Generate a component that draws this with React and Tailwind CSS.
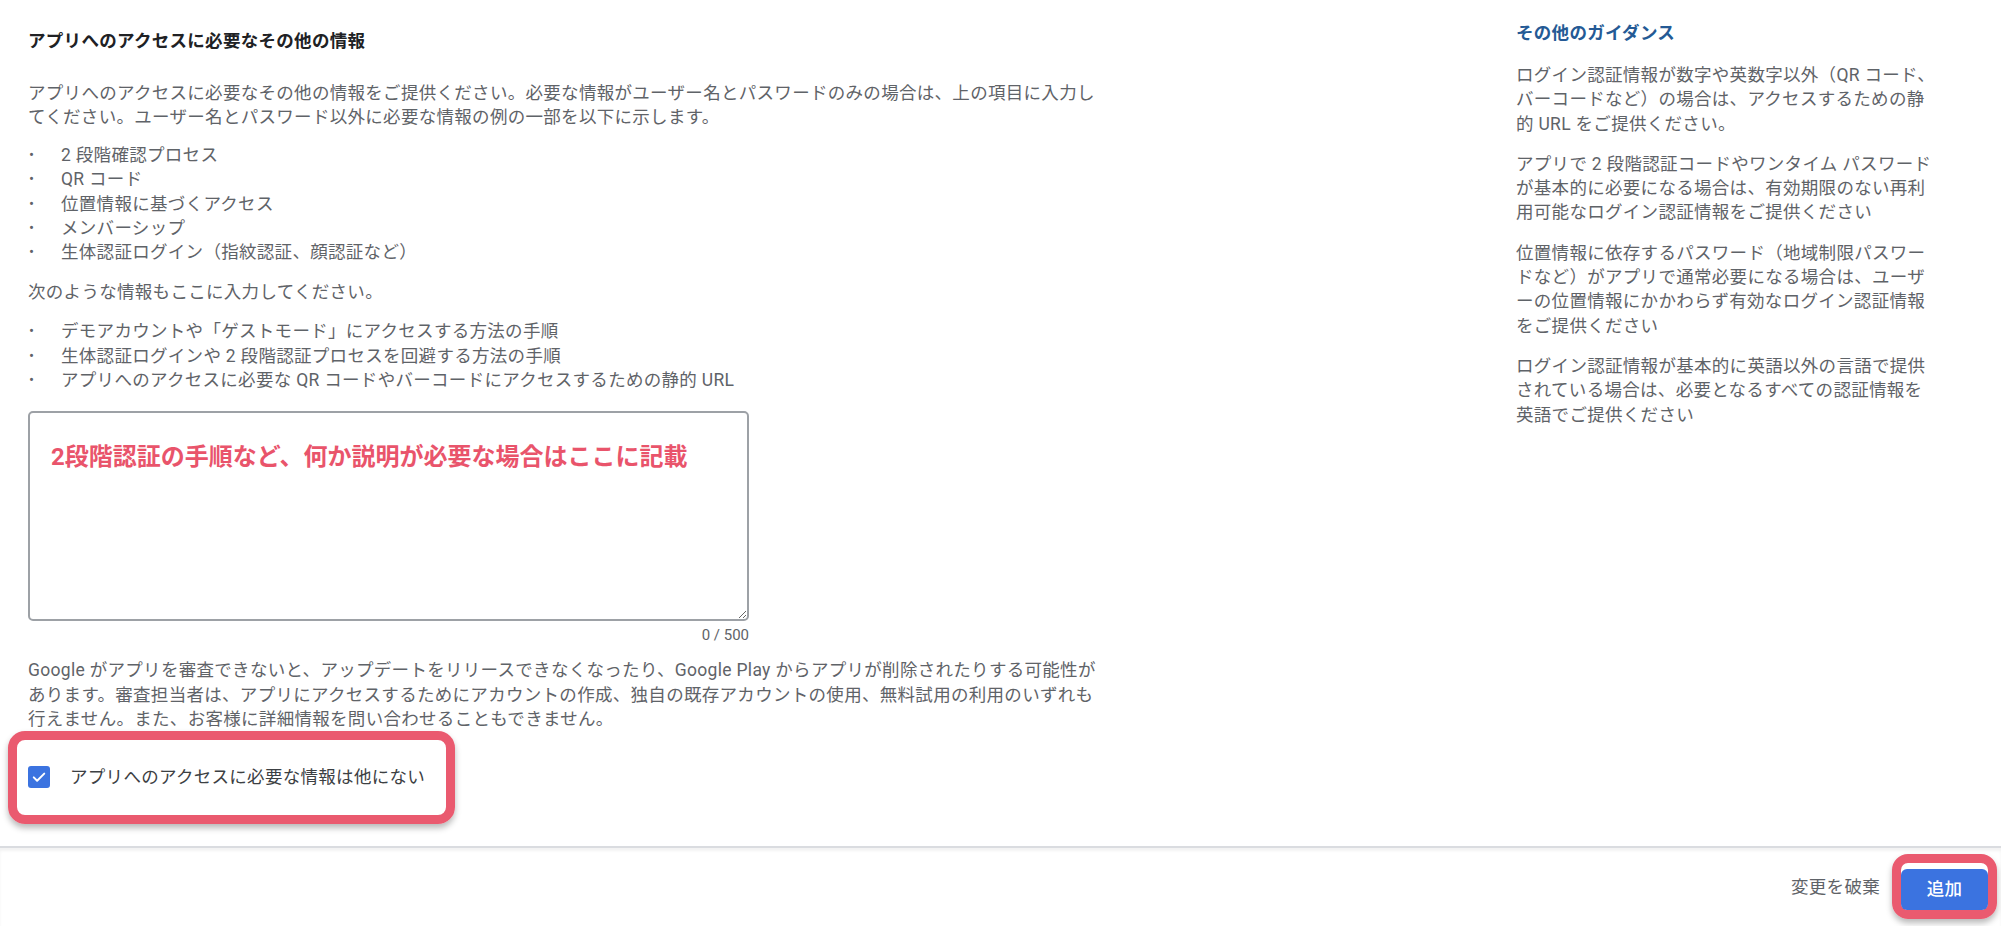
const bulletsA = [
  '2 段階確認プロセス',
  'QR コード',
  '位置情報に基づくアクセス',
  'メンバーシップ',
  '生体認証ログイン（指紋認証、顔認証など）',
];

const bulletsB = [
  'デモアカウントや「ゲストモード」にアクセスする方法の手順',
  '生体認証ログインや 2 段階認証プロセスを回避する方法の手順',
  'アプリへのアクセスに必要な QR コードやバーコードにアクセスするための静的 URL',
];

const guidance = [
  ['ログイン認証情報が数字や英数字以外（QR コード、', 'バーコードなど）の場合は、アクセスするための静', '的 URL をご提供ください。'],
  ['アプリで 2 段階認証コードやワンタイム パスワード', 'が基本的に必要になる場合は、有効期限のない再利', '用可能なログイン認証情報をご提供ください'],
  ['位置情報に依存するパスワード（地域制限パスワー', 'ドなど）がアプリで通常必要になる場合は、ユーザ', 'ーの位置情報にかかわらず有効なログイン認証情報', 'をご提供ください'],
  ['ログイン認証情報が基本的に英語以外の言語で提供', 'されている場合は、必要となるすべての認証情報を', '英語でご提供ください'],
];

function BulletList({ items, className }) {
  return (
    <ul className={className}>
      {items.map((item) => (
        <li key={item} className="flex leading-[24.3px]">
          <span className="w-[33px] shrink-0 pl-[1px] text-[15px]">•</span>
          <span>{item}</span>
        </li>
      ))}
    </ul>
  );
}

function Lines({ lines }) {
  return lines.map((line, i) => (
    <span key={i}>
      {line}
      {i < lines.length - 1 && <br />}
    </span>
  ));
}

export default function App() {
  return (
    <div className="w-full h-[926px] bg-white flex flex-col overflow-hidden font-[Roboto,'Noto_Sans_CJK_JP',sans-serif] text-[17.5px] tracking-[0.3px] text-[#5f6368]">
      <div className="flex-1 flex">
        {/* Main form column */}
        <div className="w-[1110px] shrink-0 pl-[28px] pt-[29px]">
          <h2 className="leading-[24px] font-bold text-[#202124]">アプリへのアクセスに必要なその他の情報</h2>

          <p className="mt-[28px] leading-[24px] whitespace-nowrap">
            <Lines
              lines={[
                'アプリへのアクセスに必要なその他の情報をご提供ください。必要な情報がユーザー名とパスワードのみの場合は、上の項目に入力し',
                'てください。ユーザー名とパスワード以外に必要な情報の例の一部を以下に示します。',
              ]}
            />
          </p>

          <BulletList items={bulletsA} className="mt-[14px]" />

          <p className="mt-[16px] leading-[24px]">次のような情報もここに入力してください。</p>

          <BulletList items={bulletsB} className="mt-[15px]" />

          <div className="w-[721px] mt-[19px]">
            <textarea
              placeholder="2段階認証の手順など、何か説明が必要な場合はここに記載"
              className="block w-full h-[210px] border-2 border-[#9da1a6] rounded-[5px] pl-[21px] pt-[28px] pr-4 text-[24px] leading-[32px] tracking-normal outline-none placeholder:text-[#e9546b] placeholder:font-bold"
            />
            <div className="mt-[4px] text-right text-[15px] leading-[20px] tracking-normal">0 / 500</div>
          </div>

          <p className="mt-[13px] leading-[24.5px] whitespace-nowrap">
            <Lines
              lines={[
                'Google がアプリを審査できないと、アップデートをリリースできなくなったり、Google Play からアプリが削除されたりする可能性が',
                'あります。審査担当者は、アプリにアクセスするためにアカウントの作成、独自の既存アカウントの使用、無料試用の利用のいずれも',
                '行えません。また、お客様に詳細情報を問い合わせることもできません。',
              ]}
            />
          </p>

          {/* Annotated checkbox row */}
          <div className="-ml-[20px] -mt-[1px] w-[447px] h-[93px] border-[9px] border-[#ea5a6f] rounded-[17px] shadow-[0_4px_6px_rgba(0,0,0,0.28)] flex items-center pl-[11px] gap-[20px]">
            <div className="w-[22px] h-[22px] rounded-[3px] bg-[#3b73e0] flex items-center justify-center">
              <svg viewBox="0 0 24 24" className="w-[18px] h-[18px]" fill="none" stroke="white" strokeWidth="2.6" strokeLinecap="round" strokeLinejoin="round">
                <path d="M5 12.5l4.5 4.5L19 7.5" />
              </svg>
            </div>
            <span className="text-[#3c4043] leading-[24px]">アプリへのアクセスに必要な情報は他にない</span>
          </div>
        </div>

        {/* Guidance sidebar */}
        <aside className="ml-auto mr-[55px] w-[430px] pt-[21px]">
          <h3 className="leading-[24px] font-bold text-[#245a95]">その他のガイダンス</h3>
          <div className="mt-[18px] flex flex-col gap-[16px]">
            {guidance.map((lines, i) => (
              <p key={i} className="leading-[24.3px] whitespace-nowrap">
                <Lines lines={lines} />
              </p>
            ))}
          </div>
        </aside>
      </div>

      {/* Footer */}
      <div className="h-[80px] shrink-0 border-t-2 border-[#dadce0] shadow-[inset_0_3px_3px_rgba(0,0,0,0.05)] flex items-center justify-end pr-[4px]">
        <button className="mr-[12px] text-[#5f6368] leading-[24px]">変更を破棄</button>
        <div className="w-[105px] h-[65px] border-[9px] border-[#ea5a6f] rounded-[16px] shadow-[0_4px_6px_rgba(0,0,0,0.28)] pt-[6px] mt-[-2px]">
          <button className="w-full h-full rounded-[6px] bg-[#3b73e0] text-white font-medium">追加</button>
        </div>
      </div>
    </div>
  );
}
